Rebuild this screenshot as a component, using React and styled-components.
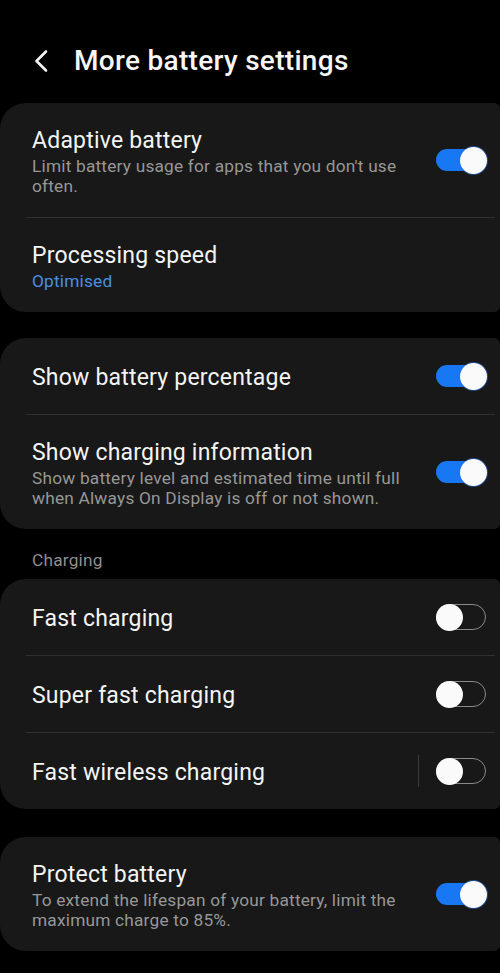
import React from 'react';
import styled, { createGlobalStyle } from 'styled-components';

const GlobalStyle = createGlobalStyle`
  html, body {
    margin: 0;
    padding: 0;
    background: #000;
    overflow-x: hidden;
  }
  body {
    font-family: Roboto, "Noto Sans", "Liberation Sans", sans-serif;
    -webkit-font-smoothing: antialiased;
  }
`;

const Page = styled.div`
  width: 500px;
  min-height: 973px;
  background: #000;
  color: #f4f4f4;
`;

const Header = styled.header`
  height: 103px;
  display: flex;
  align-items: center;
  padding: 18px 0 0 33px;
  gap: 25px;
  box-sizing: border-box;
`;

const Title = styled.h1`
  margin: 0;
  font-size: 28px;
  font-weight: 500;
  color: #f6f6f6;
  letter-spacing: 0.3px;
`;

const Card = styled.section`
  background: #181818;
  border-radius: 26px 6px 6px 26px;
  margin-top: ${(p) => p.$gap || 0}px;
`;

const Row = styled.div`
  display: flex;
  align-items: center;
  min-height: 76px;
  padding: 21px 14px 21px 32px;
  box-sizing: border-box;
`;

const Text = styled.div`
  flex: 1;
  min-width: 0;
  padding-right: 24px;
  padding-top: 2px;
`;

const RowTitle = styled.div`
  font-size: 23px;
  line-height: 29px;
  color: #f4f4f4;
  letter-spacing: 0.2px;
`;

const Sub = styled.div`
  margin-top: 1px;
  font-size: 17.3px;
  line-height: 20px;
  letter-spacing: 0.2px;
  color: ${(p) => (p.$accent ? '#4a8fe0' : '#979797')};
`;

const Divider = styled.div`
  height: 1px;
  background: #2f2f2f;
  margin: 0 5px 0 26px;
`;

const VSep = styled.div`
  width: 1px;
  height: 32px;
  background: #3a3a3a;
  margin-right: 17px;
`;

const Section = styled.div`
  height: 50px;
  display: flex;
  align-items: center;
  padding: 12px 0 0 32px;
  box-sizing: border-box;
  font-size: 17.3px;
  letter-spacing: 0.2px;
  color: #8e8e8e;
`;

const Track = styled.div`
  position: relative;
  flex: none;
  width: 50px;
  height: ${(p) => (p.$on ? 22 : 26)}px;
  border-radius: 13px;
  box-sizing: border-box;
  background: ${(p) => (p.$on ? '#1877f2' : 'transparent')};
  border: ${(p) => (p.$on ? 'none' : '1.5px solid #8a8a8a')};
`;

const Knob = styled.div`
  position: absolute;
  top: 50%;
  width: 27px;
  height: 27px;
  margin-top: -13.5px;
  border-radius: 50%;
  background: #fafafa;
  left: ${(p) => (p.$on ? 'auto' : '-1.5px')};
  right: ${(p) => (p.$on ? '-1px' : 'auto')};
  box-shadow: ${(p) => (p.$on ? '0 0 0 1px rgba(40,110,220,0.6)' : 'none')};
`;

const Toggle = ({ on }) => (
  <Track $on={on}>
    <Knob $on={on} />
  </Track>
);

const Back = () => (
  <svg width="16" height="24" viewBox="0 0 16 24" fill="none">
    <path d="M13 2.5L3.5 12L13 21.5" stroke="#f4f4f4" strokeWidth="2.6" strokeLinecap="round" strokeLinejoin="round" />
  </svg>
);

function Item({ title, sub, accent, toggle, sep }) {
  return (
    <Row>
      <Text>
        <RowTitle>{title}</RowTitle>
        {sub && <Sub $accent={accent}>{sub}</Sub>}
      </Text>
      {sep && <VSep />}
      {toggle !== undefined && <Toggle on={toggle} />}
    </Row>
  );
}

export default function App() {
  return (
    <Page>
      <GlobalStyle />
      <Header>
        <Back />
        <Title>More battery settings</Title>
      </Header>

      <Card>
        <Item title="Adaptive battery" sub="Limit battery usage for apps that you don't use often." toggle={true} />
        <Divider />
        <Item title="Processing speed" sub="Optimised" accent />
      </Card>

      <Card $gap={26}>
        <Item title="Show battery percentage" toggle={true} />
        <Divider />
        <Item
          title="Show charging information"
          sub="Show battery level and estimated time until full when Always On Display is off or not shown."
          toggle={true}
        />
      </Card>

      <Section>Charging</Section>

      <Card>
        <Item title="Fast charging" toggle={false} />
        <Divider />
        <Item title="Super fast charging" toggle={false} />
        <Divider />
        <Item title="Fast wireless charging" toggle={false} sep />
      </Card>

      <Card $gap={28}>
        <Item
          title="Protect battery"
          sub="To extend the lifespan of your battery, limit the maximum charge to 85%."
          toggle={true}
        />
      </Card>
    </Page>
  );
}
